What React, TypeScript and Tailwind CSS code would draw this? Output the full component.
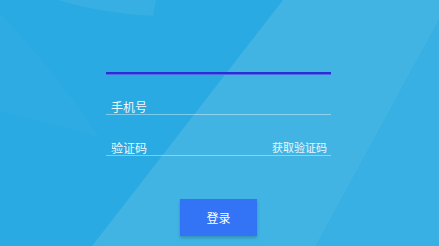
import React from 'react';

const font = { fontFamily: '"Noto Sans CJK SC", "Noto Sans", sans-serif' };

function Backdrop() {
  return (
    <svg className="absolute inset-0 w-full h-full" viewBox="0 0 439 246" preserveAspectRatio="none">
      <rect width="439" height="246" fill="#29aae2" />
      <path d="M0 14 Q55 70 100 138 Q60 125 0 112 Z" fill="#2dabe2" />
      <path d="M58 0 Q100 13 153 16 L156 0 Z" fill="#37afe3" />
      <path d="M283 0 L439 0 L439 20 L316 246 L92 246 Z" fill="#41b4e4" />
      <path d="M439 20 L439 246 L316 246 Z" fill="#38b0e3" />
    </svg>
  );
}

export default function App() {
  return (
    <div className="relative w-[439px] h-[246px] overflow-hidden" style={font}>
      <Backdrop />
      <div className="relative flex flex-col items-center pt-[72px] pr-[2px]">
        <div className="w-[225px]">
          <div className="h-[3px] bg-[#2a2cd4] border-b border-[#4a6ee2]" />

          {/* phone */}
          <div className="mt-[25px] flex items-center h-[15px] pl-[5px] border-b border-white/40">
            <span className="text-[12px] leading-[14px] text-white/95">手机号</span>
          </div>

          {/* code */}
          <div className="mt-[26px] flex items-center justify-between h-[15px] pl-[5px] pr-[4px] border-b border-white/40">
            <span className="text-[12px] leading-[14px] text-white/95">验证码</span>
            <span className="text-[11px] leading-[12px] -mt-[3px] text-white/90">获取验证码</span>
          </div>
        </div>

        <button className="mt-[43px] w-[77px] h-[37px] bg-[#3373f6] text-white text-[12px] shadow-[0_2px_3px_rgba(0,0,0,0.2)]">
          登录
        </button>
      </div>
    </div>
  );
}
